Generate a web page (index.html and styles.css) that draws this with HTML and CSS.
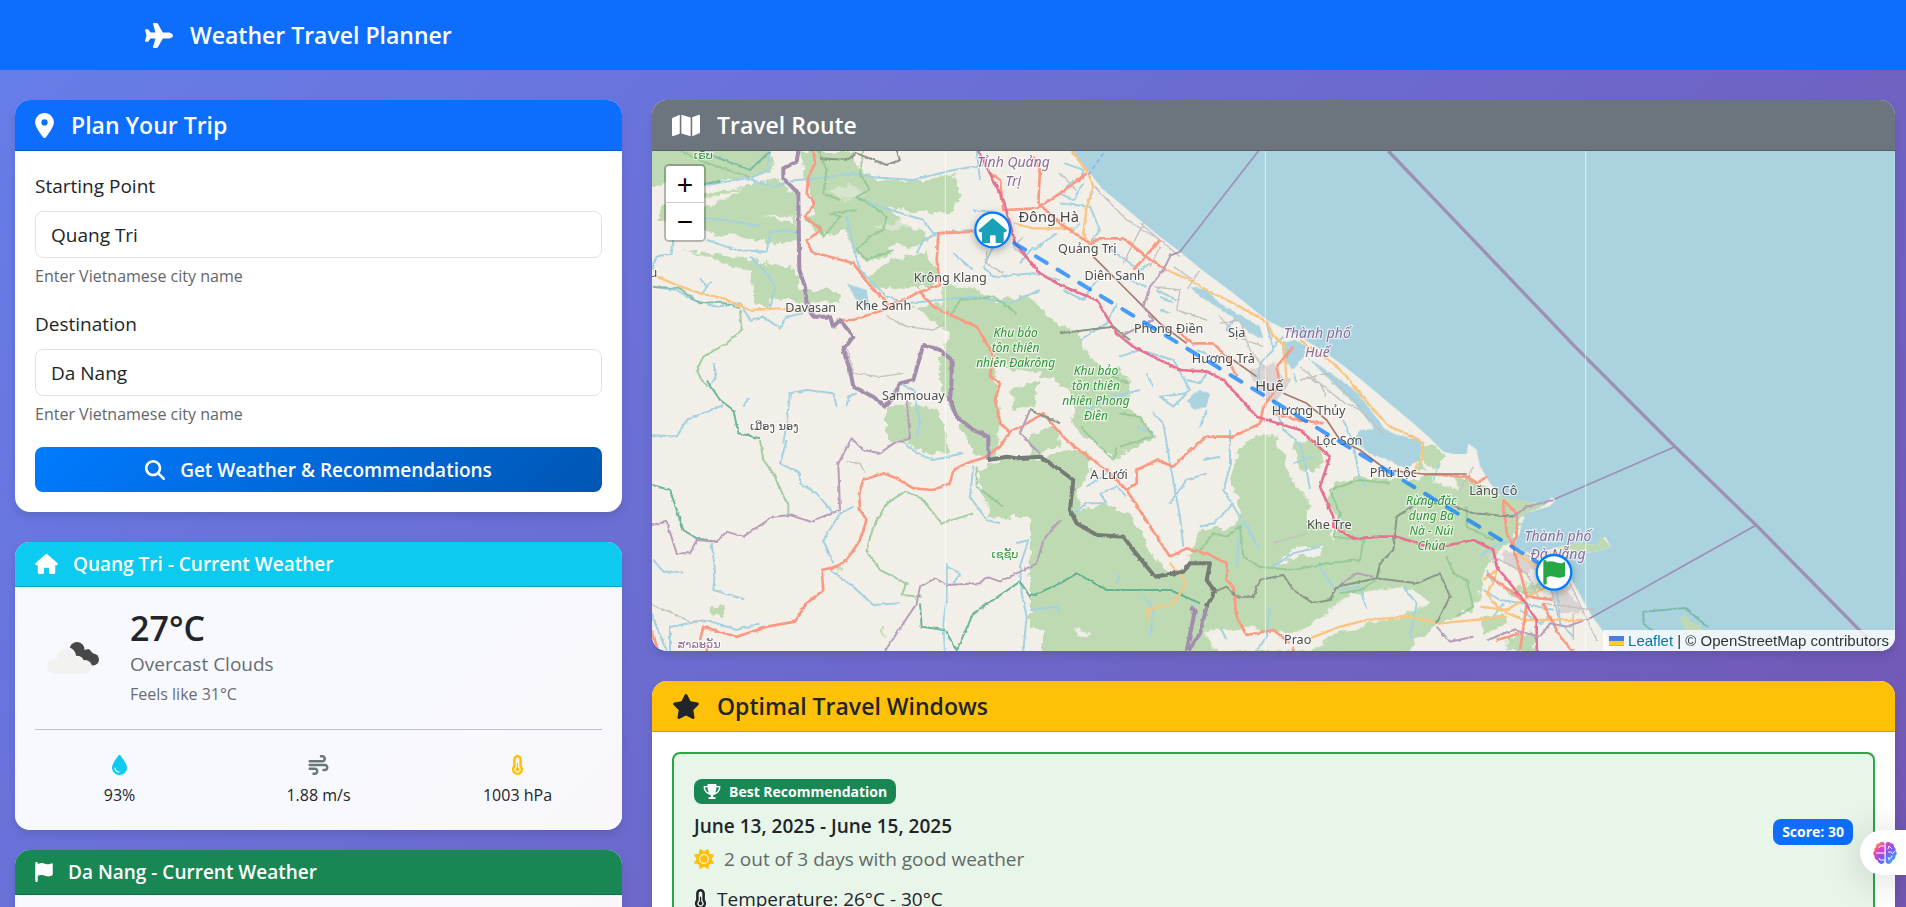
FILE: index.html
```html
<!DOCTYPE html>
<html lang="en">
<head>
<meta charset="utf-8">
<meta name="viewport" content="width=device-width, initial-scale=1">
<title>Weather Travel Planner</title>
<link rel="stylesheet" href="styles.css">
</head>
<body>
<svg class="sprite" aria-hidden="true">
  <symbol id="i-plane" viewBox="0 0 576 512"><path d="M482.3 192c34.2 0 93.7 29 93.7 64c0 36-59.5 64-93.7 64l-116.6 0L265.2 495.9c-5.7 10-16.3 16.1-27.8 16.1l-56.2 0c-10.6 0-18.3-10.2-15.4-20.4l49-171.6L112 320 68.8 377.6c-3 4-7.8 6.4-12.8 6.4l-42 0c-7.8 0-14-6.3-14-14c0-1.3 .2-2.6 .5-3.9L32 256 .5 145.9c-.4-1.3-.5-2.6-.5-3.9c0-7.8 6.3-14 14-14l42 0c5 0 9.8 2.4 12.8 6.4L112 192l102.9 0-49-171.6C162.9 10.2 170.6 0 181.2 0l56.2 0c11.5 0 22.1 6.2 27.8 16.1L365.7 192l116.6 0z"/></symbol>
  <symbol id="i-pin" viewBox="0 0 384 512"><path d="M215.7 499.2C267 435 384 279.4 384 192C384 86 298 0 192 0S0 86 0 192c0 87.4 117 243 168.3 307.2c12.3 15.3 35.1 15.3 47.4 0zM192 128a64 64 0 1 1 0 128 64 64 0 1 1 0-128z"/></symbol>
  <symbol id="i-map" viewBox="0 0 576 512"><path d="M384 476.1L192 421.2l0-385.3L384 90.8l0 385.3zm32-1.2l0-386.5L543.1 37.5c15.8-6.3 32.9 5.3 32.9 22.3l0 334.8c0 9.8-6 18.6-15.1 22.3L416 474.8zM15.1 95.1L160 37.2l0 386.5L32.9 474.5C17.1 480.8 0 469.2 0 452.2L0 117.4c0-9.8 6-18.6 15.1-22.3z"/></symbol>
  <symbol id="i-star" viewBox="0 0 576 512"><path d="M316.9 18C311.6 7 300.4 0 288.1 0s-23.4 7-28.8 18L195 150.3 51.4 171.5c-12 1.8-22 10.2-25.7 21.7s-.7 24.2 7.9 32.7L137.8 329 113.2 474.7c-2 12 3 24.2 12.9 31.3s23 8 33.8 2.3l128.3-68.5 128.3 68.5c10.8 5.7 23.9 4.9 33.8-2.3s14.9-19.3 12.9-31.3L438.5 329 542.7 225.9c8.6-8.5 11.7-21.2 7.9-32.7s-13.7-19.9-25.7-21.7L381.2 150.3 316.9 18z"/></symbol>
  <symbol id="i-search" viewBox="0 0 512 512"><path d="M416 208c0 45.9-14.9 88.3-40 122.7L502.6 457.4c12.5 12.5 12.5 32.8 0 45.3s-32.8 12.5-45.3 0L330.7 376c-34.4 25.2-76.8 40-122.7 40C93.1 416 0 322.9 0 208S93.1 0 208 0S416 93.1 416 208zM208 352a144 144 0 1 0 0-288 144 144 0 1 0 0 288z"/></symbol>
  <symbol id="i-house" viewBox="0 0 576 512"><path d="M575.8 255.5c0 18-15 32.1-32 32.1l-32 0 .7 160.2c0 2.7-.2 5.4-.5 8.1l0 16.2c0 22.1-17.9 40-40 40l-16 0c-1.1 0-2.2 0-3.3-.1c-1.4 .1-2.8 .1-4.2 .1L416 512l-24 0c-22.1 0-40-17.9-40-40l0-24 0-64c0-17.7-14.3-32-32-32l-64 0c-17.7 0-32 14.3-32 32l0 64 0 24c0 22.1-17.9 40-40 40l-24 0-31.9 0c-1.5 0-3-.1-4.5-.2c-1.2 .1-2.4 .2-3.6 .2l-16 0c-22.1 0-40-17.9-40-40l0-112c0-.9 0-1.9 .1-2.8l0-69.7-32 0c-18 0-32-14-32-32.1c0-9 3-17 10-24L266.4 8c7-7 15-8 22-8s15 2 21 7L564.8 231.5c8 7 12 15 11 24z"/></symbol>
  <symbol id="i-flag" viewBox="0 0 448 512"><path d="M64 32C64 14.3 49.7 0 32 0S0 14.3 0 32L0 64 0 368 0 480c0 17.7 14.3 32 32 32s32-14.3 32-32l0-128 64.3-16.1c41.1-10.3 84.6-5.5 122.5 13.4c44.2 22.1 95.5 24.8 141.7 7.4l34.7-13c12.5-4.7 20.8-16.6 20.8-30l0-247.7c0-23-24.2-38-44.8-27.7l-9.6 4.8c-46.3 23.2-100.8 23.2-147.1 0c-35.1-17.6-75.4-22-113.5-12.5L64 48l0-16z"/></symbol>
  <symbol id="i-drop" viewBox="0 0 384 512"><path d="M192 512C86 512 0 426 0 320C0 228.8 130.2 57.7 166.6 11.7C172.6 4.2 181.5 0 191.1 0h1.8c9.6 0 18.5 4.2 24.5 11.7C253.8 57.7 384 228.8 384 320c0 106-86 192-192 192zM96 336c0-8.8-7.2-16-16-16s-16 7.2-16 16c0 61.9 50.1 112 112 112c8.8 0 16-7.2 16-16s-7.2-16-16-16c-44.2 0-80-35.8-80-80z"/></symbol>
  <symbol id="i-wind" viewBox="0 0 512 512"><path d="M288 32c0 17.7 14.3 32 32 32l32 0c17.7 0 32 14.3 32 32s-14.3 32-32 32L32 128c-17.7 0-32 14.3-32 32s14.3 32 32 32l320 0c53 0 96-43 96-96s-43-96-96-96L320 0c-17.7 0-32 14.3-32 32zm64 352c0 17.7 14.3 32 32 32l32 0c53 0 96-43 96-96s-43-96-96-96L32 224c-17.7 0-32 14.3-32 32s14.3 32 32 32l384 0c17.7 0 32 14.3 32 32s-14.3 32-32 32l-32 0c-17.7 0-32 14.3-32 32zM128 512l32 0c53 0 96-43 96-96s-43-96-96-96L32 320c-17.7 0-32 14.3-32 32s14.3 32 32 32l128 0c17.7 0 32 14.3 32 32s-14.3 32-32 32l-32 0c-17.7 0-32 14.3-32 32s14.3 32 32 32z"/></symbol>
  <symbol id="i-thermo" viewBox="0 0 320 512"><path fill-rule="evenodd" d="M48 112a112 112 0 0 1 224 0V276.500q1 2 2 3.400A144 144 0 1 1 46 279.900q2-2 2-3.400zM160 64a48 48 0 0 0-48 48V276.500c0 17-7 32-15.300 42.500A80 80 0 1 0 223.300 319c-8-10.500-15.300-25-15.300-42.500V112a48 48 0 0 0-48-48z"/><path d="M208 368a48 48 0 1 1-64-45.300V208a16 16 0 0 1 32 0V322.700A48 48 0 0 1 208 368z"/></symbol>
  <symbol id="i-trophy" viewBox="0 0 576 512"><path d="M400 0L176 0c-26.5 0-48.1 21.8-47.1 48.2c.2 5.3 .4 10.6 .7 15.8L24 64C10.7 64 0 74.7 0 88c0 92.6 33.5 157 78.5 200.700c44.300 43.100 98.300 64.800 138.100 75.800c23.400 6.500 39.400 26 39.400 45.600c0 20.900-17 37.900-37.900 37.900L192 448c-17.700 0-32 14.300-32 32s14.300 32 32 32l192 0c17.700 0 32-14.300 32-32s-14.300-32-32-32l-26.100 0C337 448 320 431 320 410.100c0-19.600 15.900-39.200 39.400-45.600c39.900-11 93.900-32.700 138.200-75.800C542.500 245 576 180.600 576 88c0-13.300-10.700-24-24-24L446.400 64c.3-5.200 .5-10.400 .7-15.800C448.100 21.800 426.500 0 400 0zM48.900 112l84.400 0c9.100 90.100 29.200 150.300 51.900 190.600c-24.900-11-50.800-26.500-73.200-48.300c-32-31.100-58-76-63-142.300zM464.100 254.300c-22.400 21.800-48.300 37.300-73.200 48.300c22.700-40.300 42.800-100.500 51.900-190.600l84.400 0c-5.100 66.300-31.100 111.200-63 142.300z"/></symbol>
  <symbol id="i-sun" viewBox="0 0 512 512"><path d="M361.5 1.2c5 2.1 8.6 6.6 9.6 11.9L391 121l107.9 19.8c5.3 1 9.8 4.6 11.9 9.6s1.5 10.700-1.600 15.200L446.900 256l62.300 90.300c3.100 4.500 3.700 10.200 1.600 15.200s-6.600 8.600-11.900 9.600L391 391 371.100 498.900c-1 5.300-4.600 9.800-9.600 11.900s-10.700 1.500-15.200-1.600L256 446.900l-90.300 62.300c-4.500 3.100-10.200 3.700-15.200 1.600s-8.600-6.600-9.600-11.900L121 391 13.100 371.100c-5.300-1-9.800-4.600-11.900-9.600s-1.500-10.700 1.600-15.200L65.100 256 2.800 165.700c-3.100-4.500-3.700-10.200-1.600-15.200s6.600-8.600 11.900-9.600L121 121 140.900 13.100c1-5.300 4.600-9.800 9.600-11.900s10.700-1.500 15.200 1.600L256 65.100 346.300 2.800c4.500-3.100 10.200-3.700 15.200-1.600zM160 256a96 96 0 1 1 192 0 96 96 0 1 1 -192 0zm224 0a128 128 0 1 0 -256 0 128 128 0 1 0 256 0z"/></symbol>
</svg>

<nav class="navbar">
  <a class="brand" href="#"><svg class="icon icon-lg"><use href="#i-plane"/></svg>Weather Travel Planner</a>
</nav>

<main class="layout">
  <div class="column">
    <section class="card">
      <header class="card-header bg-primary"><h5 class="title"><svg class="icon icon-lg icon-narrow"><use href="#i-pin"/></svg>Plan Your Trip</h5></header>
      <form class="card-body">
        <div class="field">
          <label for="start">Starting Point</label>
          <input id="start" type="text" value="Quang Tri">
          <p class="hint">Enter Vietnamese city name</p>
        </div>
        <div class="field">
          <label for="dest">Destination</label>
          <input id="dest" type="text" value="Da Nang">
          <p class="hint">Enter Vietnamese city name</p>
        </div>
        <button class="submit" type="button"><svg class="icon icon-square"><use href="#i-search"/></svg>Get Weather &amp; Recommendations</button>
      </form>
    </section>

    <section class="card weather">
      <header class="card-header bg-info"><h6 class="subtitle"><svg class="icon"><use href="#i-house"/></svg>Quang Tri - Current Weather</h6></header>
      <div class="card-body">
        <div class="now">
          <svg class="sky" viewBox="0 0 80 80" aria-label="Overcast clouds">
            <g fill="#484848"><circle cx="42" cy="31.500" r="7.500"/><circle cx="52" cy="36.500" r="5"/><circle cx="58" cy="41.500" r="6"/><path d="M38 36L54 31 62 40 55 47 42 46z"/></g>
            <g fill="#f2f2f0" stroke="#f8f9fe" stroke-width="1.500"><circle cx="31" cy="39" r="9.500"/><circle cx="42" cy="45" r="6.500"/></g>
            <g fill="#f2f2f0"><circle cx="19.500" cy="48.500" r="7.500"/><circle cx="31" cy="39" r="9"/><circle cx="42" cy="45" r="6"/><circle cx="50" cy="49" r="7"/><path d="M19 42H48L51 56H19z"/></g>
          </svg>
          <div>
            <h3 class="temp">27°C</h3>
            <p class="sky-text">Overcast Clouds</p>
            <p class="feels">Feels like 31°C</p>
          </div>
        </div>
        <hr>
        <div class="stats">
          <div class="stat"><svg class="icon cyan"><use href="#i-drop"/></svg><span>93%</span></div>
          <div class="stat"><svg class="icon gray"><use href="#i-wind"/></svg><span>1.88 m/s</span></div>
          <div class="stat"><svg class="icon amber"><use href="#i-thermo"/></svg><span>1003 hPa</span></div>
        </div>
      </div>
    </section>

    <section class="card weather">
      <header class="card-header bg-success"><h6 class="subtitle"><svg class="icon icon-flag"><use href="#i-flag"/></svg>Da Nang - Current Weather</h6></header>
      <div class="card-body"></div>
    </section>
  </div>

  <div class="column column-wide">
    <section class="card">
      <header class="card-header bg-secondary"><h5 class="title"><svg class="icon icon-lg"><use href="#i-map"/></svg>Travel Route</h5></header>
      <div class="map">
        <svg class="map-canvas" viewBox="36 183 3729 1500" preserveAspectRatio="xMidYMid slice">
          <defs>
            <filter id="rough" x="-5%" y="-5%" width="110%" height="110%"><feTurbulence type="fractalNoise" baseFrequency=".035" numOctaves="4" seed="4"/><feDisplacementMap in="SourceGraphic" scale="34" xChannelSelector="R" yChannelSelector="G"/></filter>
            <filter id="wiggle" x="-5%" y="-5%" width="110%" height="110%"><feTurbulence type="fractalNoise" baseFrequency=".06" numOctaves="2" seed="9"/><feDisplacementMap in="SourceGraphic" scale="9" xChannelSelector="R" yChannelSelector="G"/></filter>
            <filter id="glow" x="-60%" y="-60%" width="220%" height="220%"><feDropShadow dx="0" dy="8" stdDeviation="12" flood-opacity=".3"/></filter>
          </defs>
          <rect x="36" y="183" width="3729" height="1500" fill="#f2efe9"/>

          <g fill="#bedab2" filter="url(#rough)">
            <path d="M0 150H390L400 240 330 262 200 285 100 275 0 300z"/>
            <path d="M190 310L420 270 470 320V445L420 462 300 440 190 425 50 390 70 350z"/>
            <path d="M480 183H640L660 240 720 270 830 275 940 250 965 310 930 370 830 368 740 350 790 400 880 440 830 470 740 462 760 500 680 515 640 480 610 420 545 440 500 390 530 360 500 300z"/>
            <path d="M860 485L895 540 870 595 700 592 680 560 770 505z"/>
            <path d="M130 480L250 495 340 510 470 540 480 600 590 600 600 640 490 635 390 625 380 650 345 640 330 540 200 500z"/>
            <path d="M820 650L900 640 1000 700 1040 750 1070 880 1085 1000 1060 1110 1000 1090 950 980 900 900 900 800 930 730z"/>
            <path d="M910 595L980 585 1070 630 1170 620 1260 712 1310 718 1340 790 1390 830 1440 835 1470 880 1460 960 1500 980 1540 1040 1480 1070 1420 1110 1370 1060 1300 1010 1290 900 1190 850 1100 830 1060 790 1010 720 910 660z"/>
            <path d="M738 960L800 940 900 960 930 1090 850 1090 795 1052 738 1052z"/>
            <path d="M1110 900L1200 870 1180 950 1120 960zM1160 1040L1250 1010 1260 1060 1180 1100z"/>
            <path d="M1010 1150L1090 1100 1200 1110 1280 1080 1340 1080 1350 1140 1310 1200 1320 1260 1400 1240 1470 1280 1510 1340 1540 1400 1580 1445 1640 1440 1660 1375 1680 1320 1780 1310 1800 1270 1795 1220 1770 1180 1795 1080 1840 1040 1900 1040 1930 1090 1950 1160 2010 1240 2000 1300 2060 1310 2080 1350 2100 1300 2060 1240 2080 1180 2160 1160 2320 1170 2450 1150 2520 1190 2620 1225 2720 1240 2640 1290 2620 1340 2570 1390 2530 1440 2520 1500 2500 1560 2400 1600 2330 1650 2300 1700H1212V1620H1170V1283H1050z"/>
            <path d="M1960 1060L2020 1050 2055 1110 2020 1150 1975 1130zM2340 1060L2400 1080 2415 1100 2370 1150 2330 1130z"/>
            <path d="M212 1545H250V1578H235L212 1565zM590 1434l20 2-15 6zM722 1620h8v20h-8z"/>
            <path d="M2590 1500L2690 1480 2700 1500 2640 1520zM2530 1590L2590 1570 2600 1600 2540 1630zM2600 1650L2680 1630 2690 1683H2600z"/>
          </g>

          <g fill="#f2efe9" filter="url(#rough)">
            <path d="M1700 1620L1830 1615 1960 1630 2060 1570 2130 1510 2310 1490 2370 1540 2280 1580 2180 1600 2090 1630 2010 1683H1720z"/>
            <path d="M1900 1430L1960 1370 2050 1370 2040 1400 1980 1400z"/>
            <path d="M1300 1620l40 5 10 15-30-5z"/>
            <path d="M2330 1070l40 60 60 10 30 60-80-20z"/>
            <path d="M560 300l80-20 40 40-60 10zM700 410l90-20 20 20-70 10z" opacity=".5"/>
            <path d="M100 330l130-10 90-30-110 60zM370 380l90-6v30z"/>
          </g>

          <path fill="#aad3df" d="M1295 183L1350 250 1385 295 1560 440 1620 485 1680 535 1780 610 1880 690 1980 740 2060 790 2120 835 2165 870 2260 950 2320 1000 2370 1045 2410 1085 2440 1092 2480 1092 2485 1060 2510 1080 2520 1128 2550 1180 2585 1220 2650 1232 2720 1242 2735 1220 2745 1232 2730 1248 2660 1270 2645 1300 2638 1335 2605 1350 2630 1372 2680 1395 2750 1372 2810 1360 2870 1365 2895 1340 2913 1370 2870 1385 2820 1390 2780 1395 2795 1470 2850 1570 2886 1620 2925 1683H3765V183z"/>
          <g fill="#aad3df" filter="url(#wiggle)">
            <path d="M1650 590L1700 600 1740 640 1800 675 1860 710 1870 745 1830 730 1790 690 1730 650 1680 620z"/>
            <path d="M1925 760L1965 750 2000 770 1990 800 1960 840 1930 810z"/>
            <path d="M2000 800L2080 855 2150 905 2230 1010 2245 1040 2225 1050 2160 960 2080 880z"/>
            <path d="M2160 1020L2230 1015 2270 1035 2345 1050 2340 1110 2300 1135 2240 1110 2190 1090 2140 1055z"/>
            <path d="M620 580l30 50 40 30-10-60zM1640 930l40-30 30 10-10 40-40 10z"/>
          </g>
          <g fill="#bedab2"><path d="M3120 1585l15-12 10 15 35 20 5 12h-50zM3060 1580l10-10-4 16zM2750 1374L2810 1360 2870 1365 2884 1338 2913 1370 2870 1385 2820 1388 2770 1386z"/></g>
          <g fill="#d9d4d1" filter="url(#rough)"><path d="M1830 840L1900 820 1950 880 1900 940 1850 900zM2580 1390L2660 1390 2700 1450 2620 1440zM2730 1500L2790 1490 2820 1570 2760 1570zM2540 1400l30-10v30z"/></g>

          <g class="river" filter="url(#wiggle)">
            <path d="M200 285L320 265 400 290 470 270 540 265 640 250 700 262 820 270 940 240 1030 225"/>
            <path d="M190 385L260 390 360 408M385 183V240L335 262 350 285M200 450L290 480 380 485 390 430 430 420 470 430"/>
            <path d="M36 540L50 500 95 490 100 450M180 565L200 590 215 575M200 590L185 615M330 500L380 550 405 590 390 660"/>
            <path d="M36 590L110 600 160 630 230 650 300 640 330 690 370 680 420 715 440 680 490 670"/>
            <path d="M650 320L720 350 850 390 880 430 990 420M620 380L640 470 660 540 740 620 800 640 1000 620 1110 640 1200 600M890 430L850 450 830 490"/>
            <path d="M1010 183L1020 270M1000 360L1060 365M1060 470L1030 530 1060 560 1180 550 1260 570M1180 470L1140 520M1250 430L1180 480M940 490L1000 540"/>
            <path d="M36 1035L110 1040 140 990 190 970 250 945M220 820L230 860 210 880M440 1050L420 1120 480 1150 480 1180 530 1210 580 1270"/>
            <path d="M590 950L580 910 500 900 450 910 440 1000 430 1060M620 950L625 920 650 910M310 950L325 925"/>
            <path d="M820 900L840 1000 830 1040M790 1055L830 1090 880 1110 970 1090M640 1250L600 1270 550 1350 580 1420M570 1440L640 1490 700 1545 780 1540"/>
            <path d="M215 1360L225 1440 220 1500 310 1527M40 1410L70 1445 130 1445M36 1570L50 1610 80 1683M90 1683L90 1610 200 1590 290 1620 360 1600"/>
            <path d="M920 1420V1520L910 1600 915 1683M920 1430L960 1450 940 1480M1130 1360L1165 1350 1140 1430 1145 1510 1160 1580 1150 1683M1170 1560L1250 1550 1260 1575M1000 1130L990 1220 1040 1290 1080 1300M780 880L820 900"/>
            <path d="M1300 270L1260 310 1300 330 1330 280M1260 340L1350 350 1380 420 1350 460M1400 470L1500 540 1530 520M1270 600L1330 630 1370 570M1520 590L1440 560M1320 750L1400 700 1430 640"/>
            <path d="M1440 800L1500 780 1600 810 1650 900 1600 950 1560 920 1640 910M1520 850l20 40M1340 960L1420 920 1500 900M1540 970L1570 1000 1590 1120 1620 1280 1630 1370M1590 1240L1640 1170 1700 1150M1770 1020V1130L1750 1200 1800 1280M1780 1240L1720 1300 1680 1310"/>
            <path d="M1800 1300L1790 1430M1810 1290L1860 1380M1400 1240L1380 1210 1430 1190 1460 1220M1300 1270L1340 1240 1400 1240M1510 1520L1540 1560 1530 1640M1660 1540L1670 1590M1430 1480L1440 1450"/>
            <path d="M1900 930L1930 1020 1980 1060 2000 1140 2010 1200M2110 990L2140 1060 2160 1170 2180 1190M1900 1430L1960 1390 2040 1370M2030 1420L2080 1490M2100 1500L2160 1490 2180 1560M2290 1490L2330 1540 2310 1640M2400 1120L2380 1170M1740 1610L1760 1650M1890 1550L1880 1640 1850 1683"/>
            <path d="M1880 700L1900 780 1860 820 1850 900M1790 680L1760 720 1800 740M1960 850L1970 880"/>
            <path d="M1275 220L1330 240 1330 270M1290 430L1320 400M1360 300L1340 350M1560 620L1600 640M1550 600L1610 630M1560 660L1590 670M1640 870L1680 880 1700 850M1670 780L1720 800 1740 840M1900 770L1930 740M1490 1010L1540 1030M1700 960L1680 1010M1400 1150L1340 1190M1740 1100L1690 1110M2020 1100L1960 1120"/>
            <path d="M2530 1500L2580 1530 2650 1540 2740 1560M2620 1350L2560 1370 2520 1400M2750 1490L2760 1600 2800 1640M2540 1440L2560 1480M2640 1560L2700 1600 2730 1580M2590 1540L2560 1580"/>
          </g>

          <g class="park" filter="url(#wiggle)">
            <path d="M535 183L560 240 550 310 600 330M670 183L660 250 690 300 650 320 700 350 740 380 730 420 690 440 650 480 680 510 760 480M500 390L540 410 550 440 600 380 570 370 650 360"/>
            <path d="M120 183L190 215 330 262M300 660L305 720 260 760 190 800 170 840 185 870 205 890M360 1050L370 1110 400 1150 445 1250 445 1280"/>
            <path d="M1010 1130L1010 1190 1090 1250M1000 1270L905 1300 840 1220 795 1205 740 1240 700 1310 680 1380 720 1440 800 1480 785 1515 845 1520"/>
            <path d="M930 680L960 630 1060 620 1130 670M1440 1070L1540 1040 1500 980 1440 970M1320 1010L1420 1110 1430 1070M1440 835L1420 860 1470 880"/>
            <path d="M1680 1380L1720 1330 1760 1340 1800 1310 1810 1400 1860 1430 1960 1440 2060 1420 2160 1410 2170 1350 2080 1340 2100 1270 2070 1200 2160 1170 2250 1180"/>
            <path d="M2100 1510L2160 1500 2210 1470 2220 1430M2420 1400L2440 1450 2480 1470 2500 1550 2450 1580M2560 1350L2480 1310 2480 1250"/>
            <path d="M36 1185L90 1200 120 1290 130 1320 170 1345 230 1355M200 870L240 930 280 960 295 1030 360 1045" stroke="#4da88a"/>
            <path d="M840 1540L845 1610 915 1620 950 1680 1000 1570 1140 1475 1170 1520 1260 1480 1310 1450 1400 1500 1590 1500 1680 1540" stroke="#4da88a"/>
            <path d="M36 590L120 595 180 640 240 635 300 655M180 183L330 240 390 183M120 290L240 275" stroke="#6fb59c"/>
            <path d="M3010 1565L3135 1554 3205 1612M3010 1565V1600L3040 1625" stroke="#6fb59c" filter="none"/>
          </g>

          <g class="minor" filter="url(#wiggle)">
            <path d="M1365 292L1460 390 1560 450M1450 520L1520 380M1500 400L1620 500M1600 530L1660 570M1640 600L1680 540M1540 590L1620 600 1610 660 1700 690M1740 700L1800 690 1830 780 1880 840M2000 860L2040 880 2060 920M1980 830L2100 930 2160 960 2230 1030M1980 870L2060 850 2160 950M1260 250L1310 300M1560 470L1530 530"/>
            <path d="M740 680L800 710 880 720 915 700M620 770L640 850 720 860 790 850M36 1545L100 1570 150 1595 200 1590M620 1115L660 1120 675 1150M2560 1400L2660 1450 2700 1530M2790 1480L2870 1650M2650 1380L2740 1480M2710 1540L2860 1560M1180 520L1120 470 1150 440"/>
            <path d="M1040 480L1040 520 1090 550M1740 680L1790 740 1870 770M2720 1450L2760 1600M2800 1570V1650M2460 1200L2500 1130M1900 1360L2000 1330"/>
          </g>

          <g class="secondary" filter="url(#wiggle)">
            <path d="M50 560L110 585 180 610 250 625 330 660 420 655 490 665M1295 183L1345 250 1360 290 1340 350 1330 430 1350 465M1580 540L1650 570 1700 600 1800 650 1880 695 1900 740 1930 760 1940 870M1980 750L2080 820 2120 860 2200 960 2250 1010 2320 1040 2350 1060 2345 1110 2320 1145"/>
            <path d="M1590 1420L1640 1480 1600 1540 1520 1560 1525 1590M2010 1645L2100 1610 2180 1590 2300 1580 2400 1600 2500 1590 2600 1580M1120 400L1180 415 1300 415"/>
            <path d="M2530 1470L2570 1440 2560 1480 2540 1510 2580 1560 2650 1590 2830 1590M2520 1550L2600 1560 2700 1500 2740 1480M2630 1390L2720 1450"/>
          </g>
          <g class="trunk" filter="url(#wiggle)">
            <path d="M520 183L525 220 505 260 500 310 525 340 495 380 545 420 500 450 515 485 640 520 700 600 760 650 700 670 640 690 590 690M760 640L800 625 840 605 900 585 890 510 895 430 1000 425M840 605L880 650 920 670 1010 710 1035 750 1060 800 1050 860 1080 880 1065 930 1080 1000 1110 1025 1080 1070 1040 1100 980 1120 940 1140 930 1180 880 1200 820 1195 770 1165 730 1150 670 1170 657 1210 660 1260 680 1290 660 1350 620 1410 590 1430 545 1440 550 1500 500 1540 465 1595 380 1610 290 1640 190 1610 180 1650"/>
            <path d="M1110 1025L1160 1000 1210 970 1260 1030 1290 1060 1400 1140 1460 1200 1550 1340 1590 1400M1050 250L1080 270 1090 360 1190 355 1260 310 1340 250M1180 200L1200 240 1195 340 1260 400 1350 460 1380 445 1450 445 1520 500 1580 540M1560 450L1480 540M1460 1200L1490 1180 1490 1140 1550 1110 1600 1130 1640 1090 1700 1040 1780 1040 1860 1000 1870 950M1590 1400L1640 1375 1700 1390 1760 1420 1760 1470 1780 1490 1790 1580 1820 1635 1900 1620 1950 1660"/>
            <path d="M1620 730L1660 760 1720 760 1760 800 1790 860M1870 950L1920 880 1910 830 1960 770M1900 970L1980 990 2050 1000M2350 1152L2480 1160 2510 1180 2540 1160M2590 1230L2600 1330 2620 1370 2660 1520 2740 1530M2590 1230L2630 1270 2630 1340 2610 1370M2540 1450L2660 1540 2640 1683M2710 1540L2760 1640 2800 1683M2570 1650L2640 1630M36 1625L55 1683M200 1660V1683M1960 1670V1683"/>
          </g>
          <path class="rail" d="M1360 500L1460 600 1510 650 1560 700 1640 760M1780 810L1850 860M1930 910L2000 940 2060 990 2100 1050 2160 1080 2240 1140 2350 1152H2480"/>
          <g class="motorway" filter="url(#wiggle)"><path d="M1015 183L1050 250 1090 330 1110 400 1125 460 1200 550 1260 585 1370 630 1430 730 1480 770 1620 840 1700 845 1750 870 1850 980 1980 1020 2070 1100 2040 1190 2080 1280 2080 1310 2140 1345 2220 1340 2270 1340 2380 1375 2500 1350 2560 1380 2570 1430 2650 1530 2690 1590 2690 1683"/></g>

          <g class="border" filter="url(#wiggle)">
            <path d="M475 183L470 215 430 235 430 265 475 310 478 540 495 590 500 640 520 680 570 680 580 710 600 690 640 740 610 780 630 840 640 890 700 920 735 950 760 920 780 880 820 870 850 765 900 780 935 810 935 870 930 930 950 980 1000 1020 1045 1040V1110"/>
            <path d="M1650 1555L1665 1560 1640 1683"/>
            <path class="dark" d="M1045 1110L1100 1100 1130 1105 1200 1100 1260 1140 1300 1170 1290 1260 1310 1300 1370 1335 1450 1340 1480 1380 1545 1460 1630 1445 1650 1420 1710 1420 1700 1470 1725 1505 1700 1550"/>
            <path d="M1700 1550L1680 1630 1645 1683"/>
          </g>
          <g class="province" filter="url(#wiggle)">
            <path d="M36 1305L80 1295 110 1390 150 1390 170 1350 230 1355 260 1325 310 1340 400 1280 450 1275 510 1295 600 1260 595 1120 635 1045 670 1080 720 1090 760 1060 810 1045 800 930M735 1683L830 1540 840 1490 885 1465 920 1485 1020 1480 1040 1460 1080 1475 1190 1420 1210 1350 1260 1290M1170 960L1140 1030 1200 1090"/>
            <path d="M1595 490L1570 540 1530 590 1510 650 1540 690 1450 735M2080 1500L2150 1450 2200 1460M2390 1610L2430 1655 2500 1640M2850 1585L2780 1610 2730 1600 2700 1640 2620 1620 2540 1650M2620 1280L2660 1250 2740 1230"/>
            <path class="dark" d="M540 205L620 210 650 190 740 225 780 210 770 183M1260 730L1420 710 1450 735 1470 750M1170 960L1260 1000M1725 1505L1760 1490 1790 1520 1840 1520 1860 1470 1930 1455 1960 1500 2020 1540 2070 1530 2090 1490 2210 1465 2330 1480 2400 1450 2430 1520 2390 1600M2210 1465L2220 1420 2260 1380 2270 1280 2330 1240 2420 1240 2500 1270 2620 1280"/>
          </g>
          <g class="maritime">
            <path class="wide" d="M2245 183L2805 770 3105 1070 3350 1307 3720 1683"/>
            <path d="M1855 183L1620 485 1595 495M3105 1070L2745 1227M3345 1307L2850 1585"/>
          </g>
          <path d="M1390 190L1345 255" stroke="#7fb0e6" stroke-width="4" stroke-dasharray="12 10"/>
          <path d="M916 183V1683M1876 183V1683M2837 183V1683" stroke="#fff" stroke-width="3" opacity=".65"/>

          <g class="places">
            <g class="town">
              <text x="512" y="665">Davasan</text><text x="730" y="660">Khe Sanh</text><text x="931" y="577">Krông Klang</text>
              <text x="820" y="929">Sanmouay</text><text x="1342" y="490">Quảng Trị</text><text x="1424" y="570">Diên Sanh</text>
              <text x="1586" y="730">Phong Điền</text><text x="1790" y="741">Sịa</text><text x="1750" y="818">Hương Trà</text>
              <text x="2006" y="974">Hương Thủy</text><text x="2098" y="1066">Lộc Sơn</text><text x="2260" y="1160">Phú Lộc</text>
              <text x="1407" y="1167">A Lưới</text><text x="2068" y="1316">Khe Tre</text><text x="1973" y="1663">Prao</text><text x="2560" y="1215">Lăng Cô</text>
              <text x="403" y="1020" class="lao">ເມືອງ ນອງ</text><text x="40" y="560">u</text>
            </g>
            <g class="city"><text x="1226" y="396">Đông Hà</text><text x="1888" y="902">Huế</text></g>
            <g class="nature">
              <text x="1127" y="742">Khu bảo</text><text x="1127" y="787">tồn thiên</text><text x="1127" y="832">nhiên Đakrông</text>
              <text x="1368" y="855">Khu bảo</text><text x="1368" y="900">tồn thiên</text><text x="1368" y="945">nhiên Phong</text><text x="1368" y="990">Điền</text>
              <text x="2374" y="1245">Rừng đặc</text><text x="2374" y="1290">dụng Bà</text><text x="2374" y="1335">Nà - Núi</text><text x="2374" y="1380">Chúa</text>
              <text x="1095" y="1404" class="lao">ເຊຊັບ</text><text x="190" y="208" class="lao">ເຣັບ</text>
            </g>
            <g class="region">
              <text x="1120" y="231">Tỉnh Quảng</text><text x="1120" y="287">Trị</text>
              <text x="2032" y="744">Thành phố</text><text x="2032" y="800">Huế</text>
              <text x="2754" y="1352">Thành phố</text><text x="2754" y="1408">Đà Nẵng</text>
              <text x="177" y="1673" class="lao">ສາລະວັນ</text>
            </g>
          </g>

          <path class="route" d="M1058 420L2742 1447"/>
          <g filter="url(#glow)"><circle class="pin" cx="1058" cy="420" r="52"/><circle class="pin" cx="2742" cy="1447" r="52"/></g>
          <path fill="#17a2b8" d="M1058 384L1101 421 1097 427H1091V456Q1091 459 1088 459H1067V440Q1067 436 1063 436H1054Q1050 436 1050 440V459H1029Q1026 459 1026 456V427H1019L1015 421z"/>
          <path fill="#28a745" d="M2710 1414Q2710 1410 2715 1410T2720 1416Q2732 1411 2748 1417T2775 1415V1459Q2762 1466 2746 1461T2720 1462V1480Q2720 1484 2715 1484T2710 1480z"/>
        </svg>
        <div class="zoom"><button type="button" aria-label="Zoom in">+</button><button type="button" aria-label="Zoom out">−</button></div>
        <div class="attribution"><a href="#"><svg class="flag" viewBox="0 0 12 8"><path fill="#4c7be1" d="M0 0h12v4H0z"/><path fill="#ffd500" d="M0 4h12v3H0z"/><path fill="#e0bc00" d="M0 7h12v1H0z"/></svg> Leaflet</a> | © OpenStreetMap contributors</div>
      </div>
    </section>

    <section class="card">
      <header class="card-header bg-warning"><h5 class="title"><svg class="icon icon-lg"><use href="#i-star"/></svg>Optimal Travel Windows</h5></header>
      <div class="card-body">
        <article class="window">
          <div class="details">
            <span class="badge badge-best"><svg class="icon"><use href="#i-trophy"/></svg>Best Recommendation</span>
            <h6 class="dates">June 13, 2025 - June 15, 2025</h6>
            <p class="good"><svg class="icon icon-square amber"><use href="#i-sun"/></svg>2 out of 3 days with good weather</p>
            <p class="range"><svg class="icon icon-thermo"><use href="#i-thermo"/></svg>Temperature: 26°C - 30°C</p>
          </div>
          <span class="badge badge-score">Score: 30</span>
        </article>
      </div>
    </section>
  </div>
</main>

<button class="assistant" type="button" aria-label="Assistant">
  <svg viewBox="0 0 24 24">
    <defs><linearGradient id="brain" x1="0" y1="0" x2="24" y2="24" gradientUnits="userSpaceOnUse"><stop offset=".1" stop-color="#ffa51f"/><stop offset=".3" stop-color="#e83fc0"/><stop offset=".55" stop-color="#7a58f0"/><stop offset=".9" stop-color="#28b4ff"/></linearGradient></defs>
    <path fill="url(#brain)" d="M11.500 2.500C11.500 .5 7 .3 6.200 2.200 4 2 2.500 4 3.200 6 1 6.800 1 9 1.600 10 -.3 11 0 14 1.600 14.800 1.300 17.500 2.500 19 4.500 19.200 5 22 8 23.600 10 22.600Q11.500 22 11.500 20z"/>
    <path fill="url(#brain)" d="M12.700 2.500C12.700 .5 17 .3 17.800 2.200 20 2 21.500 4 20.800 6 23 6.800 23 9 22.400 10 24.300 11 24 14 22.400 14.800 22.700 17.500 21.500 19 19.500 19.200 19 22 16 23.600 14 22.600Q12.700 22 12.700 20z"/>
    <path fill="none" stroke="#fff" stroke-width="1" stroke-linecap="round" d="M11.500 5H8Q6 5 6 6.500M11.500 12H3.500M11.500 19H8Q6 19 6 17.500M15 8l1-3 2.500 2.500M15.500 11q3-1 4 1.500M19.500 12.500l2-2M15 17q4 1 4-2M16 17v2"/>
  </svg>
</button>
</body>
</html>
```

FILE: styles.css
```css
* {
  box-sizing: border-box;
}

body {
  margin: 0;
  height: 100vh;
  overflow: hidden;
  font: 400 19px/30px "Open Sans", "Noto Sans", sans-serif;
  color: #212529;
  background: linear-gradient(135deg, #667eea 0%, #764ba2 130%);
}

h3, h5, h6, p {
  margin: 0;
}

.sprite {
  display: none;
}

.icon {
  width: 23px;
  height: 20px;
  fill: currentColor;
  flex: none;
}

.icon-lg {
  width: 28px;
  height: 25px;
}

.icon-narrow {
  width: 19px;
}

.icon-square {
  width: 20px;
}

.icon-flag {
  width: 18px;
}

.icon-thermo {
  width: 13px;
}

.cyan { color: #0dcaf0; }
.gray { color: #6c757d; }
.amber { color: #ffc107; }

.navbar {
  display: flex;
  align-items: center;
  height: 70px;
  padding-left: 145px;
  background: #0d6efd;
}

.brand {
  display: flex;
  align-items: center;
  gap: 17px;
  color: #fff;
  font-size: 23px;
  font-weight: 600;
  text-decoration: none;
}

.layout {
  display: grid;
  grid-template-columns: 607fr 1243fr;
  gap: 30px;
  padding: 30px 11px 0 15px;
}

.column {
  display: flex;
  flex-direction: column;
  gap: 20px;
  min-width: 0;
}

.column > .card:first-child {
  margin-bottom: 10px;
}

.card {
  flex: none;
  overflow: hidden;
  border-radius: 15px;
  background: #fff;
  box-shadow: 0 5px 8px rgba(0, 0, 0, .1);
}

.card-header {
  padding: 10px 20px;
  color: #fff;
  border-bottom: 1px solid rgba(0, 0, 0, .18);
}

.bg-primary { background: #0d6efd; }
.bg-info { background: #0dcaf0; }
.bg-success { background: #198754; }
.bg-secondary { background: #6c757d; }
.bg-warning { background: #ffc107; color: #212529; }

.title,
.subtitle {
  display: flex;
  align-items: center;
  gap: 17px;
  font-size: 23px;
  line-height: 30px;
  font-weight: 600;
}

.subtitle {
  gap: 15px;
  font-size: 19px;
  line-height: 24px;
}

.card-body {
  padding: 20px;
}

.weather .card-body {
  background: linear-gradient(135deg, #f8f9fe 60%, #f9f7fc);
}

.field {
  margin-bottom: 20px;
}

.field label {
  display: block;
  margin-bottom: 10px;
}

.field input {
  display: block;
  width: 100%;
  height: 47px;
  padding: 0 15px;
  border: 1px solid #dee2e6;
  border-radius: 8px;
  background: #fff;
  color: inherit;
  font: inherit;
}

.hint {
  margin-top: 5px;
  font-size: 16px;
  line-height: 26px;
  color: #5f666c;
}

.submit {
  display: flex;
  align-items: center;
  justify-content: center;
  gap: 15px;
  width: 100%;
  height: 45px;
  border: 0;
  border-radius: 8px;
  background: linear-gradient(135deg, #007bff, #0056b3);
  color: #fff;
  font: inherit;
  font-weight: 600;
}

.now {
  display: flex;
  align-items: center;
  gap: 15px;
}

.sky {
  width: 80px;
  height: 80px;
}

.temp {
  font-size: 34px;
  line-height: 42px;
  font-weight: 600;
}

.sky-text,
.feels {
  color: #686c72;
}

.feels {
  font-size: 16px;
}

hr {
  margin: 20px 0;
  border: 0;
  border-top: 1px solid #bfc1c7;
}

.stats {
  display: grid;
  grid-template-columns: repeat(3, 1fr);
  margin: 0 -15px;
}

.stat {
  display: flex;
  flex-direction: column;
  align-items: center;
  gap: 5px;
  padding-top: 5px;
  font-size: 16px;
}

.map {
  position: relative;
  height: 500px;
  overflow: hidden;
}

.map-canvas {
  display: block;
  width: 100%;
  height: 100%;
}

.map-canvas path {
  stroke-linejoin: round;
}

.river, .park, .minor, .secondary, .trunk, .motorway, .border, .province, .maritime, .rail {
  fill: none;
}

.river { stroke: #a5d2e1; stroke-width: 6; }
.park { stroke: #8fc592; stroke-width: 6; opacity: .8; }
.minor { stroke: #c3c1c1; stroke-width: 4; }
.secondary { stroke: #fac581; stroke-width: 7; }
.trunk { stroke: #fb9a82; stroke-width: 8; }
.rail { stroke: #a6776b; stroke-width: 5; }
.motorway { stroke: #e8718f; stroke-width: 8; }
.border { stroke: #a28dab; stroke-width: 12; }
.border .dark { stroke: #747c74; }
.province { stroke: #b79fb9; stroke-width: 6; }
.province .dark { stroke: #8b9787; }
.maritime { stroke: #9d90b0; stroke-width: 5; }
.maritime .wide { stroke-width: 10; }

.places {
  font-family: "Noto Sans", sans-serif;
  font-size: 38px;
  text-anchor: middle;
  stroke: rgba(255, 255, 255, .65);
  stroke-width: 7px;
  paint-order: stroke;
}

.town { fill: #4b4b4b; }
.city { fill: #444; font-size: 44px; }
.nature { fill: #2e9539; font-size: 36px; font-style: italic; }
.region { fill: #8c6b99; font-size: 42px; font-style: italic; }
.lao { font-family: "DejaVu Sans", sans-serif; font-size: 34px; font-style: normal; }

.route {
  stroke: #007bff;
  stroke-width: 12;
  stroke-linecap: round;
  stroke-dasharray: 38 38;
  opacity: .7;
}

.pin {
  fill: #fff;
  stroke: #007bff;
  stroke-width: 7;
}

.zoom {
  position: absolute;
  top: 13px;
  left: 12px;
  display: flex;
  flex-direction: column;
  border: 2px solid rgba(0, 0, 0, .25);
  border-radius: 5px;
  background-clip: padding-box;
}

.zoom button {
  width: 38px;
  height: 37px;
  padding: 0;
  border: 0;
  border-radius: 0 0 3px 3px;
  background: #fff;
  color: #000;
  font: 28px/37px "Liberation Sans", sans-serif;
}

.zoom button:first-child {
  border-bottom: 1px solid #ccc;
  border-radius: 3px 3px 0 0;
}

.attribution {
  position: absolute;
  right: 0;
  bottom: 0;
  padding: 0 6px;
  background: rgba(255, 255, 255, .8);
  color: #333;
  font: 15px/21px "Liberation Sans", sans-serif;
}

.attribution a {
  color: #0078a8;
  text-decoration: none;
}

.flag {
  width: 15px;
  height: 10px;
}

.window {
  display: flex;
  justify-content: space-between;
  align-items: flex-start;
  padding: 25px 20px 20px;
  border: 2px solid #28a745;
  border-radius: 8px;
  background: #e8f5e9;
}

.details {
  display: flex;
  flex-direction: column;
  align-items: flex-start;
}

.badge {
  display: inline-flex;
  align-items: center;
  height: 25px;
  padding: 0 9px;
  border-radius: 8px;
  color: #fff;
  font-size: 14px;
  font-weight: 700;
}

.badge .icon {
  width: 18px;
  height: 15px;
  margin-right: 8px;
}

.badge-best {
  background: #198754;
}

.badge-score {
  height: 26px;
  margin-top: 40px;
  background: #0d6efd;
}

.dates {
  margin: 10px 0 6px;
  font-size: 19px;
  line-height: 24px;
  font-weight: 600;
}

.good,
.range {
  display: flex;
  align-items: center;
  gap: 10px;
}

.good {
  margin-bottom: 10px;
  color: #5f6b68;
}

.assistant {
  position: fixed;
  right: 0;
  bottom: 32px;
  display: flex;
  align-items: center;
  width: 46px;
  height: 45px;
  padding: 0 0 0 13px;
  border: 0;
  border-radius: 23px 0 0 23px;
  background: #fff;
  box-shadow: 0 4px 40px rgba(0, 0, 0, .18);
}

.assistant svg {
  width: 24px;
  height: 24px;
}
```
